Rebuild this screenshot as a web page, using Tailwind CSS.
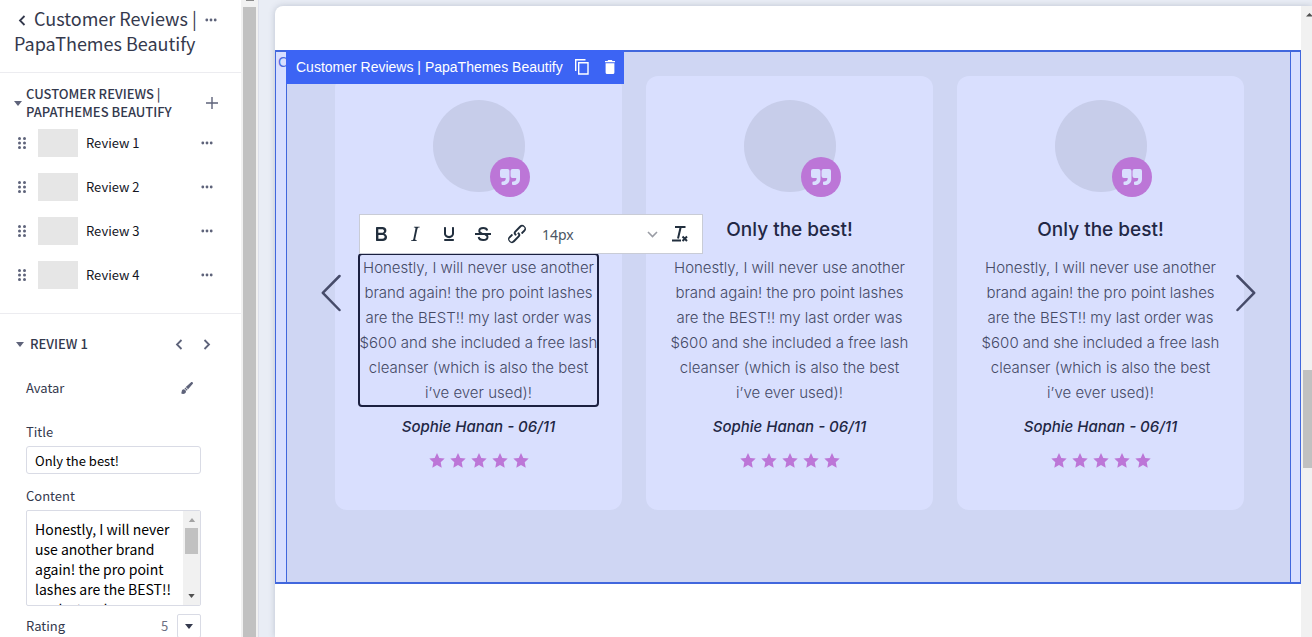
<!DOCTYPE html>
<html lang="en">
<head>
<meta charset="utf-8">
<title>Customer Reviews | PapaThemes Beautify</title>
<script src="https://cdn.jsdelivr.net/npm/@tailwindcss/browser@4"></script>
</head>
<body class="h-screen overflow-hidden flex bg-[#e9edf5] font-['Inter','Liberation_Sans',sans-serif]">

<svg class="hidden">
  <symbol id="dots" viewBox="0 0 12 4"><g fill="#5e637a"><circle cx="1.8" cy="2" r="1.4"/><circle cx="6" cy="2" r="1.4"/><circle cx="10.2" cy="2" r="1.4"/></g></symbol>
  <symbol id="grip" viewBox="0 0 8 12"><g fill="#5e637a"><circle cx="1.5" cy="1.5" r="1.5"/><circle cx="6.5" cy="1.5" r="1.5"/><circle cx="1.5" cy="6" r="1.5"/><circle cx="6.5" cy="6" r="1.5"/><circle cx="1.5" cy="10.5" r="1.5"/><circle cx="6.5" cy="10.5" r="1.5"/></g></symbol>
  <symbol id="caret" viewBox="0 0 8 5"><path d="M0 0h8L4 5z" fill="currentColor"/></symbol>
  <symbol id="quote" viewBox="0 0 20 16"><path fill="#d9dffe" d="M2 0h5.500a2 2 0 0 1 2 2v8c0 3.500-2.500 6-6 6H2.500a1 1 0 0 1-1-1v-1.500a1 1 0 0 1 1-1H3c1.500 0 2.700-1 2.700-2.500V9H2a2 2 0 0 1-2-2V2a2 2 0 0 1 2-2zM12.500 0H18a2 2 0 0 1 2 2v8c0 3.500-2.500 6-6 6h-1a1 1 0 0 1-1-1v-1.500a1 1 0 0 1 1-1h.5c1.500 0 2.700-1 2.700-2.500V9h-3.700a2 2 0 0 1-2-2V2a2 2 0 0 1 2-2z"/></symbol>
  <symbol id="star" viewBox="0 0 16 15"><path fill="#bc76d7" d="M8 0l2.300 4.900 5.400.7-4 3.700 1 5.400L8 12.100l-4.700 2.600 1-5.400-4-3.700 5.400-.7z"/></symbol>
</svg>

<aside class="w-[241px] shrink-0 bg-white text-[#34394d] text-[13px] leading-[18px] font-['Noto_Sans_CJK_SC',sans-serif] overflow-hidden">
  <header class="h-[73px] border-b border-[#ececf0] flex items-start pl-[14px] pr-6 pt-[6px]">
    <h1 class="flex-1 whitespace-nowrap text-[18px] leading-[25px]"><button aria-label="Back" class="w-4 mr-1 inline-flex justify-center"><svg class="w-2 h-[11px]" viewBox="0 0 8 11" fill="none" stroke="#34394d" stroke-width="1.800"><path d="M6.500 1L2 5.500 6.500 10"/></svg></button>Customer Reviews |<br>PapaThemes Beautify</h1>
    <button aria-label="More" class="mt-3"><svg class="w-3 h-1"><use href="#dots"/></svg></button>
  </header>

  <section class="h-[241px] border-b border-[#ececf0] pt-3 pl-[14px] pr-7">
    <div class="flex items-center h-9 -mr-[5px]">
      <svg class="w-2 h-[5px] mr-1 text-[#5e637a]"><use href="#caret"/></svg>
      <h2 class="flex-1 whitespace-nowrap text-[13px] leading-[18px] font-medium">CUSTOMER REVIEWS |<br>PAPATHEMES BEAUTIFY</h2>
      <button aria-label="Add review"><svg class="w-3 h-3" viewBox="0 0 12 12" stroke="#5e637a" stroke-width="1.400"><path d="M6 0v12M0 6h12"/></svg></button>
    </div>
    <ul class="pt-2 flex flex-col gap-4 text-[#14161f] pl-1">
      <li class="flex items-center h-7"><svg class="w-2 h-3 mr-3"><use href="#grip"/></svg><span class="w-10 h-7 bg-[#e6e6e6] mr-2"></span><span class="flex-1">Review 1</span><button aria-label="More for review 1" class="flex"><svg class="w-3 h-1"><use href="#dots"/></svg></button></li>
      <li class="flex items-center h-7"><svg class="w-2 h-3 mr-3"><use href="#grip"/></svg><span class="w-10 h-7 bg-[#e6e6e6] mr-2"></span><span class="flex-1">Review 2</span><button aria-label="More for review 2" class="flex"><svg class="w-3 h-1"><use href="#dots"/></svg></button></li>
      <li class="flex items-center h-7"><svg class="w-2 h-3 mr-3"><use href="#grip"/></svg><span class="w-10 h-7 bg-[#e6e6e6] mr-2"></span><span class="flex-1">Review 3</span><button aria-label="More for review 3" class="flex"><svg class="w-3 h-1"><use href="#dots"/></svg></button></li>
      <li class="flex items-center h-7"><svg class="w-2 h-3 mr-3"><use href="#grip"/></svg><span class="w-10 h-7 bg-[#e6e6e6] mr-2"></span><span class="flex-1">Review 4</span><button aria-label="More for review 4" class="flex"><svg class="w-3 h-1"><use href="#dots"/></svg></button></li>
    </ul>
  </section>

  <section class="pt-[21px] pl-4 pr-[30px]">
    <div class="flex items-center h-[18px]">
      <svg class="w-2 h-[5px] mr-[6px] text-[#5e637a]"><use href="#caret"/></svg>
      <h2 class="flex-1 font-medium">REVIEW 1</h2>
      <button aria-label="Previous" class="mr-5"><svg class="w-2 h-[11px]" viewBox="0 0 8 11" fill="none" stroke="#5e637a" stroke-width="1.800"><path d="M6.500 1L2 5.500 6.500 10"/></svg></button>
      <button aria-label="Next"><svg class="w-2 h-[11px]" viewBox="0 0 8 11" fill="none" stroke="#5e637a" stroke-width="1.800"><path d="M1.500 1L6 5.500 1.500 10"/></svg></button>
    </div>
    <div class="pl-[10px] pr-[10px]">
      <div class="flex items-center justify-between mt-[26px] pr-2">
        <span>Avatar</span>
        <button aria-label="Edit avatar"><svg class="w-3 h-3" viewBox="0 0 12 12"><path fill="#5e637a" d="M9.800.5c.6-.6 1.400-.6 1.900-.1.400.500.400 1.200-.1 1.700L7.100 7.200 4.800 5zM4.300 5.500l2.300 2.300-.8.900-2.300-2.300zM2.600 7.200c1.300 0 2.400 1 2.400 2.300 0 1.600-1.300 2.500-2.900 2.500-.8 0-1.600-.3-2.100-.9.600-.1.700-.8.700-1.500 0-1.300.8-2.400 1.900-2.400z"/></svg></button>
      </div>
      <label for="title" class="block mt-[26px]">Title</label>
      <input id="title" value="Only the best!" class="block w-full h-7 mt-[5px] px-2 border border-[#d9dbe5] rounded-[3px] text-black outline-none">
      <label for="content" class="block mt-[13px]">Content</label>
      <div class="flex h-24 mt-[5px] border border-[#d9dbe5] rounded-[2px] overflow-hidden">
        <textarea id="content" class="flex-1 min-w-0 resize-none overflow-hidden outline-none pl-2 pt-2 text-[14px] leading-5 text-black whitespace-pre">Honestly, I will never
use another brand
again! the pro point
lashes are the BEST!!
my last order was</textarea>
        <div class="w-[17px] bg-[#f1f1f1] flex flex-col items-center py-[7px]">
          <svg class="w-2 h-1 shrink-0" viewBox="0 0 8 5"><path d="M0 5h8L4 0z" fill="#a3a3a3"/></svg>
          <div class="w-[13px] h-[26px] mt-[6px] shrink-0 bg-[#c1c1c1]"></div>
          <svg class="w-[7px] h-1 mt-auto shrink-0 text-[#505050]"><use href="#caret"/></svg>
        </div>
      </div>
      <div class="flex items-center justify-between mt-2 h-6">
        <label for="rating">Rating</label>
        <div class="relative w-10 h-6">
          <select id="rating" class="appearance-none w-full h-full text-[#6c7083] outline-none"><option>5</option><option>4</option><option>3</option></select>
          <span class="absolute right-0 top-0 w-6 h-6 border border-[#d9dbe5] rounded-[2px] flex items-center justify-center pointer-events-none text-[#34394d]"><svg class="w-2 h-[5px]"><use href="#caret"/></svg></span>
        </div>
      </div>
    </div>
  </section>
</aside>

<div class="w-[18px] shrink-0 bg-[#f1f1f1] border-r border-[#dcdfea] flex flex-col items-center">
  <svg class="w-2 h-[1px] shrink-0"><rect width="8" height="1" fill="#8a8a8a"/></svg>
  <div class="w-[13px] flex-1 mt-[6px] bg-[#c1c1c1]"></div>
</div>

<div class="flex-1 min-w-0 pl-4 pt-[6px]">
  <div class="flex h-full bg-white rounded-tl-lg shadow-[0_0_6px_rgba(60,70,100,0.250)]">
    <main class="flex-1 min-w-0 pt-[44px]">
      <section class="relative border-y-2 border-x border-[#4167dd] bg-[#d8dfff] pl-[10px] pr-[9px]">
        <span class="absolute left-[2px] top-0 text-[14px] leading-5 text-[#4b6be0] font-['Liberation_Sans',sans-serif]">C</span>

        <div class="relative border-x border-[#4167dd] bg-[#cfd6f3] pl-12 pr-[46px] pt-6 pb-[72px] grid grid-cols-3 gap-6 text-center">

          <article class="bg-[#d9dffe] rounded-xl pt-6 h-[434px] px-6 flex flex-col items-center text-[#222745]">
            <div class="relative w-[92px] h-[92px] rounded-full bg-[#c7cdea]"><span class="absolute left-[57px] top-[57px] w-10 h-10 rounded-full bg-[#bc76d7] flex items-center justify-center"><svg class="w-5 h-4"><use href="#quote"/></svg></span></div>
            <h3 class="mt-6 text-[19px] leading-7 font-medium">Only the best!</h3>
            <p contenteditable="true" class="mt-[11px] w-[237px] text-[15px] leading-[25px] font-light whitespace-nowrap text-[#454a66] outline-2 outline-[#1b2040] rounded-[2px] flex flex-col items-center"><span>Honestly, I will never use another</span><span>brand again! the pro point lashes</span><span>are the BEST!! my last order was</span><span>$600 and she included a free lash</span><span>cleanser (which is also the best</span><span>i’ve ever used)!</span></p>
            <p class="mt-[11px] text-[15px] leading-[22px] font-medium italic">Sophie Hanan - 06/11</p>
            <div role="img" aria-label="5 stars" class="flex gap-[5px] mt-[15px]"><svg class="w-4 h-[15px]"><use href="#star"/></svg><svg class="w-4 h-[15px]"><use href="#star"/></svg><svg class="w-4 h-[15px]"><use href="#star"/></svg><svg class="w-4 h-[15px]"><use href="#star"/></svg><svg class="w-4 h-[15px]"><use href="#star"/></svg></div>
          </article>

          <article class="bg-[#d9dffe] rounded-xl pt-6 h-[434px] px-6 flex flex-col items-center text-[#222745]">
            <div class="relative w-[92px] h-[92px] rounded-full bg-[#c7cdea]"><span class="absolute left-[57px] top-[57px] w-10 h-10 rounded-full bg-[#bc76d7] flex items-center justify-center"><svg class="w-5 h-4"><use href="#quote"/></svg></span></div>
            <h3 class="mt-6 text-[19px] leading-7 font-medium">Only the best!</h3>
            <p class="mt-[11px] w-[237px] text-[15px] leading-[25px] font-light whitespace-nowrap text-[#454a66] flex flex-col items-center"><span>Honestly, I will never use another</span><span>brand again! the pro point lashes</span><span>are the BEST!! my last order was</span><span>$600 and she included a free lash</span><span>cleanser (which is also the best</span><span>i’ve ever used)!</span></p>
            <p class="mt-[11px] text-[15px] leading-[22px] font-medium italic">Sophie Hanan - 06/11</p>
            <div role="img" aria-label="5 stars" class="flex gap-[5px] mt-[15px]"><svg class="w-4 h-[15px]"><use href="#star"/></svg><svg class="w-4 h-[15px]"><use href="#star"/></svg><svg class="w-4 h-[15px]"><use href="#star"/></svg><svg class="w-4 h-[15px]"><use href="#star"/></svg><svg class="w-4 h-[15px]"><use href="#star"/></svg></div>
          </article>

          <article class="bg-[#d9dffe] rounded-xl pt-6 h-[434px] px-6 flex flex-col items-center text-[#222745]">
            <div class="relative w-[92px] h-[92px] rounded-full bg-[#c7cdea]"><span class="absolute left-[57px] top-[57px] w-10 h-10 rounded-full bg-[#bc76d7] flex items-center justify-center"><svg class="w-5 h-4"><use href="#quote"/></svg></span></div>
            <h3 class="mt-6 text-[19px] leading-7 font-medium">Only the best!</h3>
            <p class="mt-[11px] w-[237px] text-[15px] leading-[25px] font-light whitespace-nowrap text-[#454a66] flex flex-col items-center"><span>Honestly, I will never use another</span><span>brand again! the pro point lashes</span><span>are the BEST!! my last order was</span><span>$600 and she included a free lash</span><span>cleanser (which is also the best</span><span>i’ve ever used)!</span></p>
            <p class="mt-[11px] text-[15px] leading-[22px] font-medium italic">Sophie Hanan - 06/11</p>
            <div role="img" aria-label="5 stars" class="flex gap-[5px] mt-[15px]"><svg class="w-4 h-[15px]"><use href="#star"/></svg><svg class="w-4 h-[15px]"><use href="#star"/></svg><svg class="w-4 h-[15px]"><use href="#star"/></svg><svg class="w-4 h-[15px]"><use href="#star"/></svg><svg class="w-4 h-[15px]"><use href="#star"/></svg></div>
          </article>

          <button aria-label="Previous slide" class="absolute left-[34px] top-[222px]"><svg class="w-5 h-[38px]" viewBox="0 0 20 38" fill="none" stroke="#464b69" stroke-width="2.500" stroke-linecap="round" stroke-linejoin="round"><path d="M18.500 2L1.800 18.800 18.500 36"/></svg></button>
          <button aria-label="Next slide" class="absolute right-[34px] top-[222px]"><svg class="w-5 h-[38px]" viewBox="0 0 20 38" fill="none" stroke="#464b69" stroke-width="2.500" stroke-linecap="round" stroke-linejoin="round"><path d="M1.500 2L18.200 18.800 1.500 36"/></svg></button>

          <!-- Rich text toolbar over the first card -->
          <div role="toolbar" aria-label="Text formatting" class="absolute left-[72px] top-[162px] w-[344px] h-10 bg-white border border-[#c9ccd6] flex items-center pl-2 text-[#222f3e]">
            <button aria-label="Bold" class="w-[34px] flex justify-center shrink-0 pr-2"><svg class="w-6 h-6" viewBox="0 0 24 24"><path fill="#222f3e" fill-rule="evenodd" d="M7.800 19c-.3 0-.5 0-.6-.2l-.2-.5V5.700c0-.2 0-.4.200-.5l.6-.2h5c1.500 0 2.700.3 3.500 1 .7.600 1.100 1.400 1.100 2.500a3 3 0 0 1-.6 1.900c-.4.600-1 1-1.600 1.200.4.100.9.300 1.300.6s.8.700 1 1.200c.4.400.5 1 .5 1.600 0 1.300-.4 2.300-1.300 3-.8.700-2.100 1-3.800 1H7.800zm5-8.300c.6 0 1.200-.1 1.600-.5.400-.3.600-.7.600-1.300 0-1.100-.8-1.700-2.300-1.700H9.300v3.500h3.400zm.5 6c.7 0 1.300-.1 1.700-.4.400-.4.600-.9.600-1.500s-.2-1-.7-1.400c-.4-.3-1-.4-2-.4H9.400v3.800h4z"/></svg></button>
            <button aria-label="Italic" class="w-[34px] flex justify-center shrink-0 pr-2"><svg class="w-6 h-6" viewBox="0 0 24 24"><path fill="#222f3e" fill-rule="evenodd" d="M16.700 4.700l-.1.900h-.3c-.6 0-1 0-1.400.3-.3.300-.4.600-.5 1.100l-2.100 9.800v.6c0 .5.400.8 1.400.8h.2l-.2.800H8l.2-.8h.2c1.100 0 1.800-.5 2-1.500l2-9.800.1-.5c0-.6-.4-.8-1.400-.8h-.3l.2-.9h5.800z"/></svg></button>
            <button aria-label="Underline" class="w-[34px] flex justify-center shrink-0 pr-2"><svg class="w-6 h-6" viewBox="0 0 24 24"><path fill="#222f3e" fill-rule="evenodd" d="M16 5c.6 0 1 .4 1 1v5.500a4 4 0 0 1-.4 1.800l-1 1.400a5.300 5.300 0 0 1-5.500 1 5 5 0 0 1-1.600-1c-.5-.4-.8-.9-1.100-1.400a4 4 0 0 1-.4-1.800V6c0-.6.4-1 1-1s1 .4 1 1v5.500c0 .3 0 .6.200 1l.6.700a3.300 3.300 0 0 0 2.200.8 3.400 3.400 0 0 0 2.200-.8c.3-.2.400-.5.600-.8l.2-.9V6c0-.6.4-1 1-1zM8 17h8c.6 0 1 .4 1 1s-.4 1-1 1H8a1 1 0 0 1 0-2z"/></svg></button>
            <button aria-label="Strikethrough" class="w-[34px] flex justify-center shrink-0 pr-2"><svg class="w-6 h-6" viewBox="0 0 24 24"><path fill="none" stroke="#222f3e" stroke-width="2" d="M16.200 8.500C15.800 6.700 14.300 6 12.200 6c-2.300 0-3.900 1.100-3.900 2.900C8.300 10.500 9.500 11 11 11.500m3 1c1.500.4 2.500 1 2.500 2.500 0 1.900-1.700 3-4.300 3-2.500 0-4.200-1-4.500-3M4 12h16"/></svg></button>
            <button aria-label="Link" class="w-[34px] flex justify-center shrink-0 pr-2"><svg class="w-6 h-6" viewBox="0 0 24 24"><path fill="#222f3e" d="M6.200 12.300a1 1 0 0 1 1.400 1.400l-2.100 2a2 2 0 1 0 2.700 2.800l4.800-4.800a1 1 0 0 0 0-1.400 1 1 0 1 1 1.400-1.300 2.900 2.900 0 0 1 0 4L9.600 20a3.900 3.900 0 0 1-5.500-5.500l2-2zm11.600-.6a1 1 0 0 1-1.400-1.400l2-2a2 2 0 1 0-2.600-2.800L11 10.300a1 1 0 0 0 0 1.400A1 1 0 1 1 9.600 13a2.900 2.900 0 0 1 0-4L14.400 4a3.900 3.900 0 0 1 5.500 5.500l-2 2z"/></svg></button>
            <div class="relative flex-1 h-full mr-2">
              <select aria-label="Font size" class="appearance-none w-full h-full pl-1 text-[14px] text-[#4b5563] outline-none font-['Noto_Sans',sans-serif]"><option>14px</option><option>16px</option></select>
              <svg class="absolute right-0 top-4 mr-[2px] w-[11px] h-[7px] pointer-events-none" viewBox="0 0 11 7" fill="none" stroke="#9a9da5" stroke-width="1.600"><path d="M1 1l4.500 4.500L10 1"/></svg>
            </div>
            <button aria-label="Clear formatting" class="w-[34px] shrink-0"><svg class="w-6 h-6" viewBox="0 0 24 24"><path fill="none" stroke="#222f3e" stroke-width="2" d="M7 5h10.500M12.700 5L10 16.500M4 18.500h9M14.500 14.500l4.500 4.500M19 14.500L14.500 19"/></svg></button>
          </div>

          <!-- Selected section label -->
          <div class="absolute -left-px -top-[2px] w-[338px] h-[34px] bg-[#3c64f4] text-white flex items-center pl-[10px] text-[14px] font-['Liberation_Sans',sans-serif] whitespace-nowrap">
            <span class="flex-1 text-left">Customer Reviews | PapaThemes Beautify</span>
            <button aria-label="Duplicate" class="mr-4"><svg class="w-[14px] h-4" viewBox="0 0 14 16" fill="none" stroke="#fff" stroke-width="1.400"><path d="M.7 12V.7h9.800M3.700 3.700h9.300v11.300H3.700z"/></svg></button>
            <button aria-label="Delete" class="mr-[9px]"><svg class="w-[10px] h-[14px]" viewBox="0 0 10 14" fill="#fff"><path d="M0 1h2.500l.7-1h3.600l.7 1H10v1.300H0zM.6 3.300h8.800v9.200A1.500 1.500 0 0 1 7.900 14H2.100A1.500 1.500 0 0 1 .6 12.500z"/></svg></button>
          </div>
        </div>
      </section>
    </main>

    <div class="w-[11px] shrink-0 bg-[#f1f1f1] overflow-hidden pl-[2px]">
      <svg class="block w-[9px] h-[17px]" viewBox="0 0 9 17"><path d="M3 10.500L6.500 7 10 10.500z" fill="#505050"/></svg>
      <div class="h-[98px] mt-[347px] bg-[#c1c1c1]"></div>
    </div>
  </div>
</div>
</body>
</html>
